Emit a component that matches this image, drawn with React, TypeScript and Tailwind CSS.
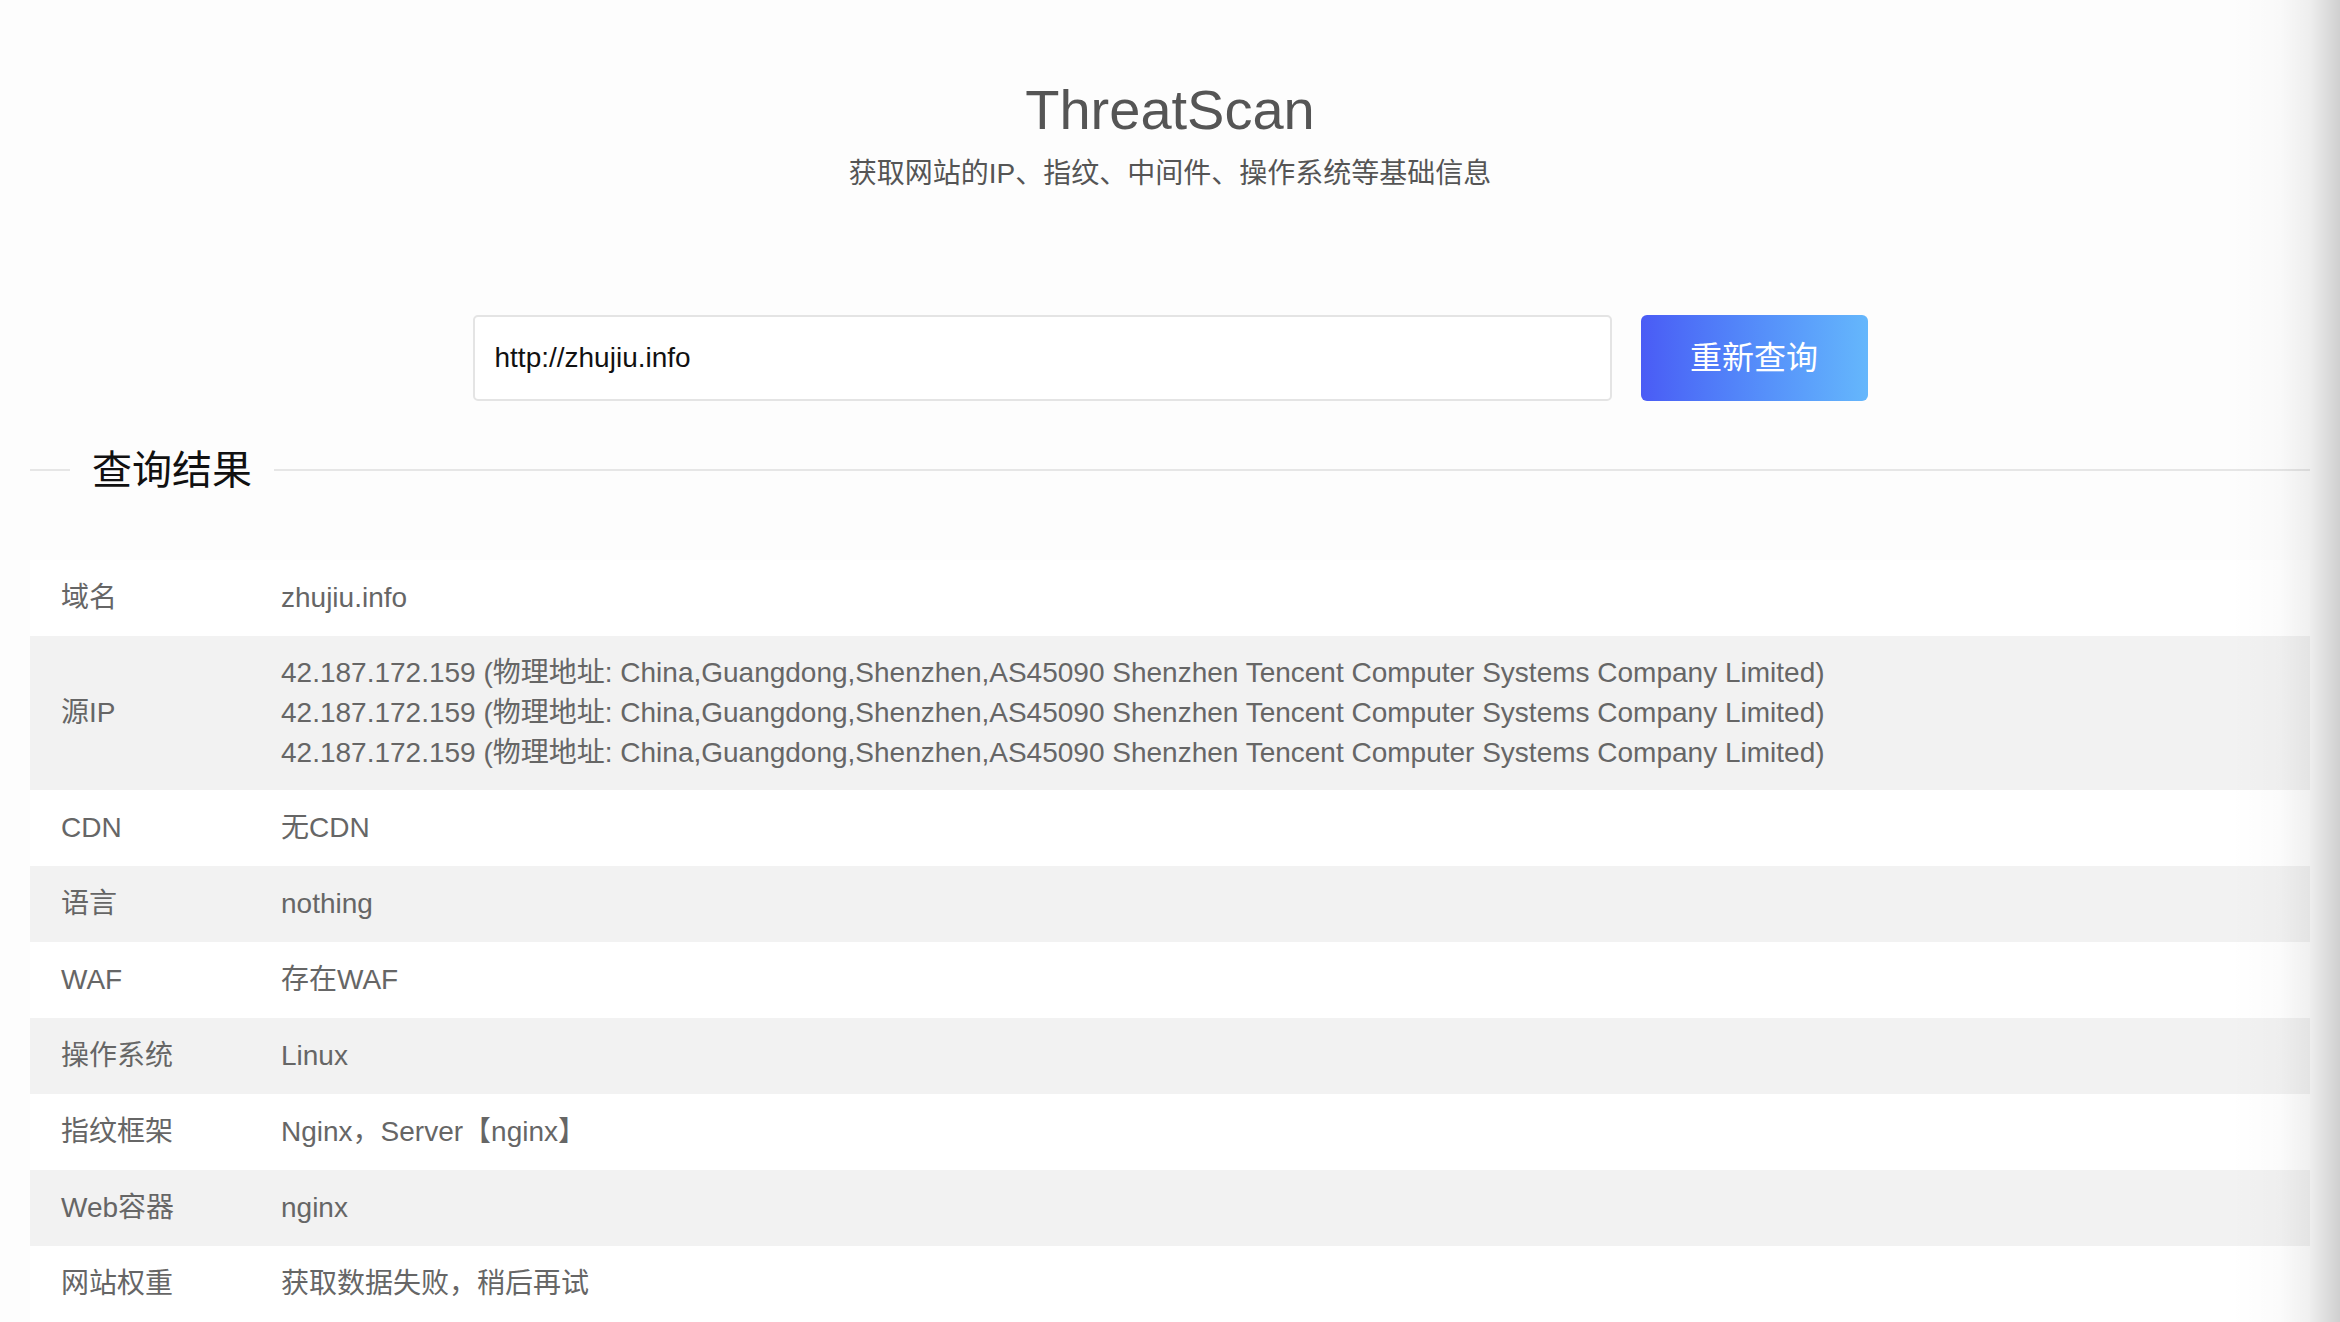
import React from "react";

const rows: { label: string; values: string[] }[] = [
  { label: "域名", values: ["zhujiu.info"] },
  {
    label: "源IP",
    values: [
      "42.187.172.159 (物理地址: China,Guangdong,Shenzhen,AS45090 Shenzhen Tencent Computer Systems Company Limited)",
      "42.187.172.159 (物理地址: China,Guangdong,Shenzhen,AS45090 Shenzhen Tencent Computer Systems Company Limited)",
      "42.187.172.159 (物理地址: China,Guangdong,Shenzhen,AS45090 Shenzhen Tencent Computer Systems Company Limited)",
    ],
  },
  { label: "CDN", values: ["无CDN"] },
  { label: "语言", values: ["nothing"] },
  { label: "WAF", values: ["存在WAF"] },
  { label: "操作系统", values: ["Linux"] },
  { label: "指纹框架", values: ["Nginx，Server【nginx】"] },
  { label: "Web容器", values: ["nginx"] },
  { label: "网站权重", values: ["获取数据失败，稍后再试"] },
];

export default function App() {
  return (
    <div
      className="relative h-screen w-full overflow-hidden bg-[#fdfdfd]"
      style={{ fontFamily: '"Liberation Sans", Arial, "Noto Sans CJK SC", sans-serif' }}
    >
      <div className="px-[30px] pt-[78px]">
        <h1 className="text-center text-[56px] leading-[64px] font-normal text-[#555555]">ThreatScan</h1>
        <p className="mt-[12px] text-center text-[28px] leading-[40px] text-[#555555]">
          获取网站的IP、指纹、中间件、操作系统等基础信息
        </p>

        <div className="mt-[121px] flex justify-center gap-[29px]">
          <div className="flex h-[86px] w-[1139px] items-center rounded-[5px] border-2 border-[#e4e4e4] bg-white pl-[20px] text-[28px] text-[#111111]">
            http://zhujiu.info
          </div>
          <button className="flex h-[86px] w-[227px] items-center justify-center rounded-[6px] bg-gradient-to-r from-[#4a5bf5] to-[#65b7fc] text-[32px] text-white">
            重新查询
          </button>
        </div>

        <div className="mt-[41px] flex h-[56px] items-center">
          <div className="h-[2px] w-[40px] bg-[#e6e6e6]" />
          <div className="px-[22px] text-[40px] leading-[56px] text-[#111111]">查询结果</div>
          <div className="h-[2px] flex-1 bg-[#e6e6e6]" />
        </div>

        <div className="mt-[62px] text-[28px] leading-[40px] text-[#666666]">
          {rows.map((r, i) => (
            <div
              key={r.label}
              className={`flex items-center ${i % 2 === 1 ? "bg-[#f2f2f2]" : "bg-white"} ${
                r.values.length > 1 ? "py-[17px]" : "h-[76px]"
              }`}
            >
              <div className="w-[251px] shrink-0 pl-[31px]">{r.label}</div>
              <div className="flex flex-col">
                {r.values.map((v, j) => (
                  <div key={j}>{v}</div>
                ))}
              </div>
            </div>
          ))}
        </div>
      </div>

      <div className="pointer-events-none absolute right-0 top-0 h-full w-[110px] bg-[linear-gradient(to_right,rgba(0,0,0,0)_0%,rgba(0,0,0,0.015)_45%,rgba(0,0,0,0.06)_72%,rgba(0,0,0,0.18)_100%)]" />
    </div>
  );
}
